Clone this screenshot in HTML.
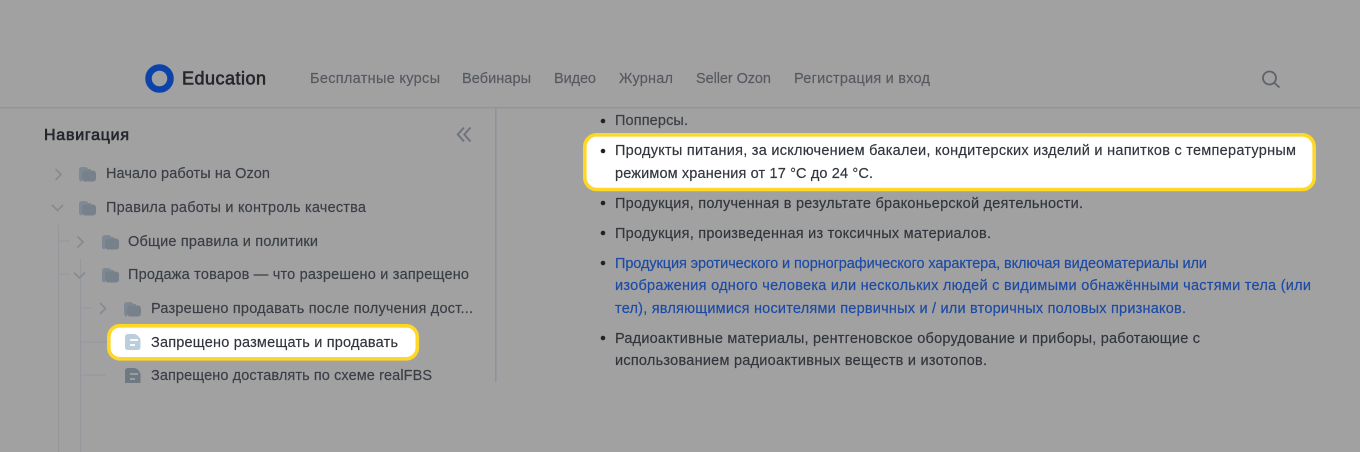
<!DOCTYPE html>
<html><head><meta charset="utf-8"><style>
html,body{margin:0;padding:0;background:#a1a1a1}
svg{display:block}
text{font-family:"Liberation Sans",sans-serif;font-size:14.5px;stroke-width:.18px}
.n{fill:#565a60;stroke:#565a60}
.t{fill:#3a3e45;stroke:#3a3e45}
.c{fill:#32363c;stroke:#32363c}
.b{fill:#1c4aa6;stroke:#1c4aa6}
.h{fill:#24272d;stroke:#24272d;stroke-width:.6px}
</style></head><body>
<svg width="1360" height="452" viewBox="0 0 1360 452" xmlns="http://www.w3.org/2000/svg">
<defs>
<g id="f">
<path d="M0 4Q0 1 3 1H6Q7.500 1 8.500 2L9.500 3H12V6H5Q3 6 3 8V15.500Q0 15.500 0 12.500Z" fill="#7f8993"/>
<rect x="3" y="4.500" width="14" height="11" rx="3" fill="#77818c"/>
</g>
<path id="r" d="M0 0L5.500 5.500L0 11" fill="none" stroke="#858a91" stroke-width="1.600"/>
<path id="d" d="M0 0L5.500 5.500L11 0" fill="none" stroke="#858a91" stroke-width="1.600"/>
</defs>
<rect width="1360" height="452" fill="#a1a1a1"/>
<rect y="107" width="1360" height="1.400" fill="#90959b"/>
<rect x="495" y="108" width="1.600" height="274" fill="#8e9399"/>

<circle cx="159.500" cy="78.500" r="11" fill="none" stroke="#0d43a8" stroke-width="6.500"/>
<text class="h" x="182" y="84.500" textLength="84" lengthAdjust="spacing" style="font-size:18px">Education</text>
<text class="n" x="310" y="83" textLength="130" lengthAdjust="spacing">Бесплатные курсы</text>
<text class="n" x="462" y="83" textLength="69" lengthAdjust="spacing">Вебинары</text>
<text class="n" x="554" y="83" textLength="42" lengthAdjust="spacing">Видео</text>
<text class="n" x="619" y="83" textLength="54" lengthAdjust="spacing">Журнал</text>
<text class="n" x="696" y="83" textLength="75" lengthAdjust="spacing">Seller Ozon</text>
<text class="n" x="794" y="83" textLength="136" lengthAdjust="spacing">Регистрация и вход</text>
<circle cx="1269.500" cy="78" r="6.500" fill="none" stroke="#5e6369" stroke-width="1.800"/>
<path d="M1274.500 83L1279.500 87.500" stroke="#5e6369" stroke-width="1.800" fill="none"/>

<text class="h" x="44" y="140" textLength="85" lengthAdjust="spacing" style="font-size:16px">Навигация</text>
<path d="M464 127.500L457.800 134.500L464 141.500M470.500 127.500L464.300 134.500L470.500 141.500" fill="none" stroke="#6f747a" stroke-width="2"/>

<path d="M58.500 225V452M80.500 259V452" stroke="#94989d" stroke-width="1.200" fill="none"/>
<path d="M58 241H70M58 274H70M80 308H92M80 342H108M80 375H106" stroke="#96999f" stroke-width="1.200" fill="none"/>

<use href="#r" x="55.500" y="169"/>
<use href="#f" x="79" y="166"/>
<text class="t" x="106" y="178" textLength="164" lengthAdjust="spacing">Начало работы на Ozon</text>
<use href="#d" x="52" y="205"/>
<use href="#f" x="79" y="200"/>
<text class="t" x="106" y="212" textLength="260" lengthAdjust="spacing">Правила работы и контроль качества</text>
<use href="#r" x="77.500" y="236.500"/>
<use href="#f" x="102" y="234"/>
<text class="t" x="128" y="246" textLength="190" lengthAdjust="spacing">Общие правила и политики</text>
<use href="#d" x="74" y="272.500"/>
<use href="#f" x="102" y="267"/>
<text class="t" x="128" y="279" textLength="341" lengthAdjust="spacing">Продажа товаров — что разрешено и запрещено</text>
<use href="#r" x="100" y="303"/>
<use href="#f" x="124" y="301"/>
<text class="t" x="151" y="313" textLength="322" lengthAdjust="spacing">Разрешено продавать после получения дост...</text>

<rect x="108.800" y="325.800" width="308.500" height="33" rx="11" fill="#fff" stroke="#ffd726" stroke-width="3.600"/>
<path d="M128 334H134Q136 334 137.500 335.500L139 337Q140.500 338.500 140.500 340.500V347Q140.500 350 137.500 350H128Q125 350 125 347V337Q125 334 128 334Z" fill="#bccddd"/>
<path d="M130 340H138M130 345H135" stroke="#fff" stroke-width="1.800"/>
<text class="c" x="151" y="347" textLength="247" lengthAdjust="spacing">Запрещено размещать и продавать</text>
<path d="M128 368H134Q136 368 137.500 369.500L139 371Q140.500 372.500 140.500 374.500V383H125V371Q125 368 128 368Z" fill="#6f7984"/>
<path d="M130 374H138M130 379H135" stroke="#a1a1a1" stroke-width="1.800"/>
<text class="t" x="151" y="380" textLength="281" lengthAdjust="spacing">Запрещено доставлять по схеме realFBS</text>

<rect x="584.800" y="134.800" width="729.400" height="54.700" rx="12" fill="#fff" stroke="#ffd726" stroke-width="3.600"/>
<circle cx="603" cy="121" r="2.300" fill="#1f2329"/>
<circle cx="603" cy="151" r="2.300" fill="#1f2329"/>
<circle cx="603" cy="203" r="2.300" fill="#1f2329"/>
<circle cx="603" cy="233" r="2.300" fill="#1f2329"/>
<circle cx="603" cy="263" r="2.300" fill="#1f2329"/>
<circle cx="603" cy="338" r="2.300" fill="#1f2329"/>
<text class="t" x="615" y="125" textLength="73" lengthAdjust="spacing">Попперсы.</text>
<text class="c" x="615" y="155" textLength="681" lengthAdjust="spacing">Продукты питания, за исключением бакалеи, кондитерских изделий и напитков с температурным</text>
<text class="c" x="615" y="178" textLength="258" lengthAdjust="spacing">режимом хранения от 17 °C до 24 °C.</text>
<text class="c" x="615" y="208" textLength="468" lengthAdjust="spacing">Продукция, полученная в результате браконьерской деятельности.</text>
<text class="c" x="615" y="238" textLength="376" lengthAdjust="spacing">Продукция, произведенная из токсичных материалов.</text>
<text class="b" x="615" y="268" textLength="592" lengthAdjust="spacing">Продукция эротического и порнографического характера, включая видеоматериалы или</text>
<text class="b" x="615" y="290" textLength="696" lengthAdjust="spacing">изображения одного человека или нескольких людей с видимыми обнажёнными частями тела (или</text>
<text class="b" x="615" y="313" textLength="571" lengthAdjust="spacing">тел), являющимися носителями первичных и / или вторичных половых признаков.</text>
<text class="c" x="615" y="343" textLength="585" lengthAdjust="spacing">Радиоактивные материалы, рентгеновское оборудование и приборы, работающие с</text>
<text class="c" x="615" y="365" textLength="372" lengthAdjust="spacing">использованием радиоактивных веществ и изотопов.</text>
</svg>
</body></html>
